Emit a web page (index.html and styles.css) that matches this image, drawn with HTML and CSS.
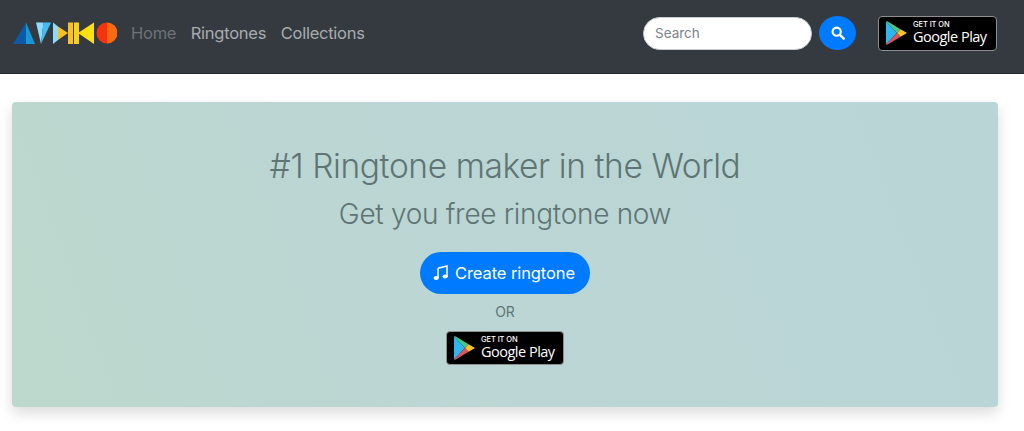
FILE: index.html
```html
<!DOCTYPE html>
<html lang="en">
<head>
<meta charset="utf-8">
<title>Ringtone maker</title>
<link rel="stylesheet" href="styles.css">
</head>
<body>
<svg class="defs" width="0" height="0" aria-hidden="true">
  <symbol id="play" viewBox="0 0 21 24">
    <path d="M0 0.5V23.5L11 12Z" fill="#2fb6ee"/>
    <path d="M0 0.5L11 12L14.6 8.2L1.3 0.2Z" fill="#4cc48a"/>
    <path d="M0 23.5L11 12L14.6 15.8L1.3 23.8Z" fill="#e0525a"/>
    <path d="M14.6 8.2L11 12L14.6 15.8L21 12Z" fill="#fbc02d"/>
  </symbol>
</svg>
<nav class="navbar">
  <svg class="logo" viewBox="0 0 104 22" width="104" height="22" role="img" aria-label="Logo">
    <path d="M0 22L13 0.5V22Z" fill="#0a5aa8"/>
    <path d="M13 0.5L22 22H13Z" fill="#1597d8"/>
    <path d="M23 0.5H30.5L28 22Z" fill="#8fdcfa"/>
    <path d="M30.5 0.5H38L28 22Z" fill="#45bdf2"/>
    <path d="M40 0.5V22L45 18V4.5Z" fill="#8fdcfa"/>
    <path d="M45 4.5V18L55 11Z" fill="#fbbf24"/>
    <rect x="55" y="0.5" width="5" height="21.5" fill="#fbbf24"/>
    <rect x="61" y="0.5" width="5" height="21.5" fill="#fbd01c"/>
    <path d="M65 11L81 0.5V22Z" fill="#fde010"/>
    <path d="M94 0.5A10.5 10.5 0 0 0 94 21.5Z" fill="#f5340f"/>
    <path d="M94 0.5A10.5 10.5 0 0 1 94 21.5Z" fill="#f76a12"/>
  </svg>
  <ul class="nav-links">
    <li><a class="nav-link nav-link-muted" href="#">Home</a></li>
    <li><a class="nav-link" href="#">Ringtones</a></li>
    <li><a class="nav-link" href="#">Collections</a></li>
  </ul>
  <form class="search">
    <input class="search-input" type="text" placeholder="Search">
    <button class="search-btn" type="button" aria-label="Search">
      <svg viewBox="0 0 16 16" width="14" height="14"><circle cx="6.5" cy="6.5" r="4.7" fill="none" stroke="#fff" stroke-width="2.4"/><path d="M10 10L14.5 14.5" stroke="#fff" stroke-width="2.8" stroke-linecap="round"/></svg>
    </button>
  </form>
  <a class="badge badge-nav" href="#">
    <svg class="badge-icon" width="21" height="24"><use href="#play"/></svg>
    <span class="badge-text"><span class="badge-small">GET IT ON</span><span class="badge-big">Google Play</span></span>
  </a>
</nav>
<main class="page">
  <section class="hero">
    <h1 class="hero-title">#1 Ringtone maker in the World</h1>
    <h2 class="hero-sub">Get you free ringtone now</h2>
    <a class="create-btn" href="#">
      <svg viewBox="0 0 16 16" width="16" height="16"><path d="M5 3.2L14 1V11.5" fill="none" stroke="#fff" stroke-width="1.5"/><path d="M5 3.2V13" fill="none" stroke="#fff" stroke-width="1.5"/><ellipse cx="3.2" cy="13" rx="2.6" ry="2" fill="#fff"/><ellipse cx="12.2" cy="11.6" rx="2.6" ry="2" fill="#fff"/></svg>
      Create ringtone
    </a>
    <p class="or">OR</p>
    <a class="badge" href="#">
      <svg class="badge-icon" width="21" height="24"><use href="#play"/></svg>
      <span class="badge-text"><span class="badge-small">GET IT ON</span><span class="badge-big">Google Play</span></span>
    </a>
  </section>
</main>
</body>
</html>
```
FILE: styles.css
```css
* { box-sizing: border-box; }
html, body { margin: 0; padding: 0; }
body {
  height: 431px;
  overflow: hidden;
  background: #fff;
  font-family: Inter, "Liberation Sans", sans-serif;
}
.defs { display: block; height: 0; }
.navbar {
  display: flex;
  align-items: center;
  height: 74px;
  padding: 0 27px 7px 13px;
  background: #343a40;
  border-bottom: 1px solid #23272b;
}
.logo { flex: none; }
.nav-links {
  display: flex;
  gap: 14.5px;
  margin: 0 0 0 14px;
  padding: 0;
  list-style: none;
}
.nav-link {
  font-size: 16.5px;
  letter-spacing: -0.25px;
  color: #a9acae;
  text-decoration: none;
}
.nav-link-muted { color: #6d7276; }
.search {
  display: flex;
  align-items: center;
  gap: 7px;
  margin-left: auto;
}
.search-input {
  width: 169px;
  height: 33px;
  padding: 0 11px;
  border: 1px solid #c9cdd1;
  border-radius: 17px;
  background: #fff;
  font: 13.5px Inter, "Liberation Sans", sans-serif;
  outline: none;
}
.search-input::placeholder { color: #7b8288; opacity: 1; }
.search-btn {
  display: flex;
  align-items: center;
  justify-content: center;
  width: 37px;
  height: 34px;
  padding: 0;
  border: 0;
  border-radius: 50%;
  background: #007bff;
}
.badge {
  display: flex;
  align-items: center;
  gap: 6px;
  width: 118px;
  height: 34px;
  padding: 0 7px;
  border: 1px solid #8f8f8f;
  border-radius: 4px;
  background: #000;
  color: #fff;
  text-decoration: none;
}
.badge-nav { margin-left: 22px; height: 35px; width: 119px; }
.badge-icon { flex: none; }
.badge-text { display: flex; flex-direction: column; white-space: nowrap; }
.badge-small { font-size: 7.5px; line-height: 8px; letter-spacing: -0.1px; font-weight: 500; }
.badge-big { font-size: 14.5px; line-height: 16px; letter-spacing: -0.5px; font-weight: 500; font-family: "Open Sans", Inter, sans-serif; }
.page { padding: 28px 26px 0 12px; }
.hero {
  display: flex;
  flex-direction: column;
  align-items: center;
  height: 305px;
  padding-top: 44px;
  border-radius: 4px;
  background: linear-gradient(70deg, #bdd8cc 0%, #bbd6d3 35%, #b9d5d6 100%);
  box-shadow: 0 6px 14px rgba(0, 0, 0, 0.14);
  color: #5f7575;
}
.hero-title {
  margin: 0;
  font-size: 33.5px;
  line-height: 41px;
  font-weight: 300;
  letter-spacing: -0.4px;
}
.hero-sub {
  margin: 10px 0 0;
  font-size: 28px;
  line-height: 34px;
  font-weight: 300;
  letter-spacing: -0.3px;
}
.create-btn {
  display: flex;
  align-items: center;
  justify-content: center;
  gap: 6px;
  width: 170px;
  height: 42px;
  margin-top: 21px;
  padding-right: 2px;
  border-radius: 21px;
  background: #007bff;
  color: #fff;
  font-size: 16.5px;
  letter-spacing: -0.1px;
  text-decoration: none;
}
.or {
  margin: 9px 0 0;
  font-size: 14px;
  line-height: 17px;
  color: #5f7575;
}
.hero .badge { margin-top: 11px; }
```
